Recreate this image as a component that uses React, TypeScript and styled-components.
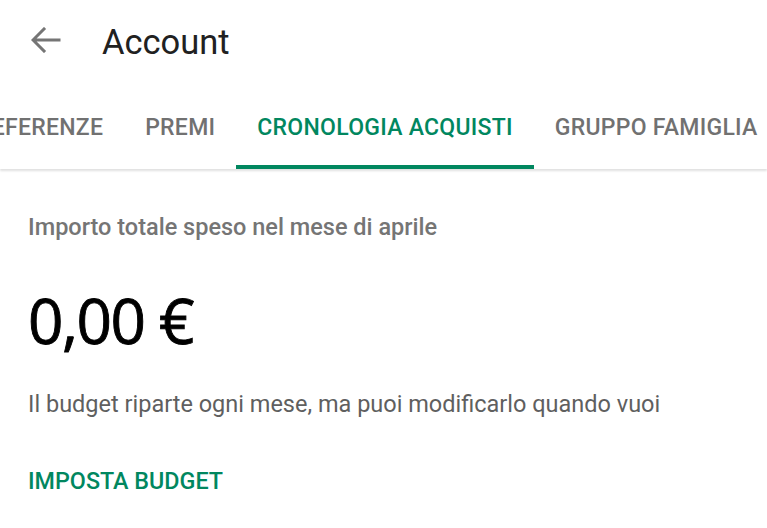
import React from 'react';
import styled, { createGlobalStyle } from 'styled-components';

const GlobalStyle = createGlobalStyle`
  html, body {
    margin: 0;
    padding: 0;
    background: #ffffff;
  }
  body {
    font-family: Roboto, "Noto Sans", sans-serif;
    overflow: hidden;
  }
`;

type Tab = { label: string; active?: boolean };

const tabs: Tab[] = [
  { label: 'Preferenze' },
  { label: 'Premi' },
  { label: 'Cronologia acquisti', active: true },
  { label: 'Gruppo famiglia' },
];

export default function App() {
  return (
    <>
      <GlobalStyle />
      <SPage>
        <SToolbar>
          <SBack aria-label="Indietro">
            <svg width="30" height="26" viewBox="0 0 30 26" fill="none">
              <path
                d="M28 13H3M13 2L2 13l11 11"
                stroke="#757575"
                strokeWidth="3"
                strokeLinecap="square"
              />
            </svg>
          </SBack>
          <STitle>Account</STitle>
        </SToolbar>
        <STabBar>
          <STabStrip>
            {tabs.map((t) => (
              <STab key={t.label} $active={t.active}>
                {t.label}
              </STab>
            ))}
          </STabStrip>
        </STabBar>
        <SContent>
          <SLabel>Importo totale speso nel mese di aprile</SLabel>
          <SAmount>0,00 €</SAmount>
          <SNote>Il budget riparte ogni mese, ma puoi modificarlo quando vuoi</SNote>
          <SAction>Imposta budget</SAction>
        </SContent>
      </SPage>
    </>
  );
}

const SPage = styled.div`
  width: 767px;
  height: 528px;
  display: flex;
  flex-direction: column;
  background: #ffffff;
`;

const SToolbar = styled.div`
  height: 84px;
  flex: none;
  display: flex;
  align-items: center;
  padding-left: 31px;
  gap: 41px;
`;

const SBack = styled.button`
  border: 0;
  background: none;
  padding: 0;
  display: flex;
  margin-top: -4px;
`;

const STitle = styled.h1`
  margin: 0;
  font-size: 34.5px;
  line-height: 40px;
  font-weight: 400;
  color: #212121;
`;

const STabBar = styled.div`
  height: 85px;
  flex: none;
  overflow: hidden;
  position: relative;
  box-shadow: 0 2px 2px rgba(0, 0, 0, 0.12);
  z-index: 1;
`;

const STabStrip = styled.div`
  display: flex;
  height: 100%;
  margin-left: -59px;
`;

const STab = styled.div<{ $active?: boolean }>`
  flex: none;
  display: flex;
  align-items: center;
  padding: 6px 21px 0;
  height: 100%;
  box-sizing: border-box;
  text-transform: uppercase;
  font-size: 23px;
  font-weight: 500;
  letter-spacing: 0.27px;
  white-space: nowrap;
  color: ${(p) => (p.$active ? '#01875f' : '#717171')};
  border-bottom: 4px solid ${(p) => (p.$active ? '#01875f' : 'transparent')};
`;

const SContent = styled.div`
  flex: 1;
  padding: 0 28px;
  display: flex;
  flex-direction: column;
  align-items: flex-start;
`;

const SLabel = styled.div`
  margin-top: 43.5px;
  font-size: 23.5px;
  font-weight: 500;
  color: #757575;
  white-space: nowrap;
`;

const SAmount = styled.div`
  margin-top: 48px;
  font-family: "Open Sans", "Noto Sans", sans-serif;
  font-size: 62px;
  font-weight: 400;
  line-height: 1;
  letter-spacing: -1.5px;
  color: #000000;
  -webkit-text-stroke: 0.9px #000000;
`;

const SNote = styled.div`
  margin-top: 39px;
  font-size: 23.5px;
  color: #5f5f5f;
  white-space: nowrap;
`;

const SAction = styled.div`
  margin-top: 49.5px;
  text-transform: uppercase;
  font-size: 23.3px;
  font-weight: 500;
  color: #01875f;
`;
